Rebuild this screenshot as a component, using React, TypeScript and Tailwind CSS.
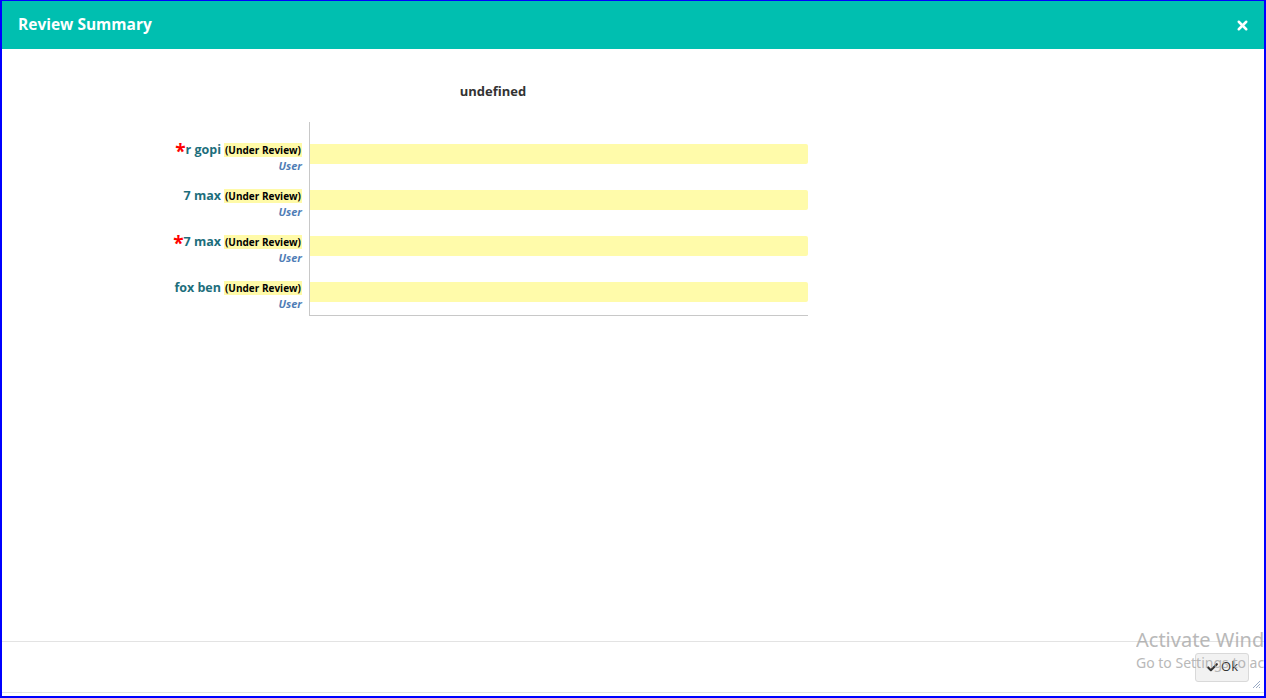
import { X, Check } from 'lucide-react'

const rows = [
  { name: 'r gopi', required: true },
  { name: '7 max', required: false },
  { name: '7 max', required: true },
  { name: 'fox ben', required: false },
]

export default function App() {
  return (
    <div
      className="relative w-[1266px] h-[698px] overflow-hidden bg-white border-t border-x-2 border-b-2 border-[#0000ff]"
      style={{ fontFamily: '"Open Sans", "Noto Sans", sans-serif' }}
    >
      <div className="flex flex-col h-[692px] border-b border-[#e3e3e3]">
        {/* header */}
        <div className="h-[48px] bg-[#00bfb0] flex items-center justify-between pl-4 pr-[14px] shrink-0">
          <h1 className="text-white text-[15.5px] font-bold">Review Summary</h1>
          <X size={15} strokeWidth={4} className="text-white" />
        </div>

        {/* body */}
        <div className="flex-1">
          <div className="ml-[176px] w-[630px] pt-[33px]">
            <div className="text-center text-[13px] font-bold text-[#333] leading-[18px]">undefined</div>
            <div className="flex items-start mt-[22px]">
              <div className="w-[124px] pt-[20px] flex flex-col items-end gap-[15px]">
                {rows.map((r, i) => (
                  <div key={i} className="flex flex-col items-end">
                    <div className="flex items-center h-[16px] whitespace-nowrap">
                      {r.required && (
                        <span className="text-[#ff0000] text-[19px] font-bold leading-none translate-y-[1px]">*</span>
                      )}
                      <span className="text-[12.5px] font-bold text-[#1d6e7c]">{r.name}</span>
                      <span className="ml-[3px] bg-[#fffaa8] text-black text-[10px] font-bold leading-[14px] px-px">
                        (Under Review)
                      </span>
                    </div>
                    <span className="text-[11px] italic font-bold text-[#4f7db6] leading-[15px]">User</span>
                  </div>
                ))}
              </div>
              <div className="ml-[7px] w-[500px] border-l border-b border-[#c8c8c8] pt-[22px] pb-[13px] flex flex-col gap-[26px]">
                {rows.map((_, i) => (
                  <div key={i} className="h-[20px] bg-[#fffbaa] rounded-r-[2px]" />
                ))}
              </div>
            </div>
          </div>
        </div>

        {/* footer */}
        <div className="h-[51px] border-t border-[#e3e3e3] flex items-center justify-end pr-[15px] shrink-0">
          <button className="flex items-center gap-[2px] h-[29px] px-[10px] bg-[#f2f2f2] border border-[#d9d9d9] rounded-[3px] text-[13px] text-[#333]">
            <Check size={13} strokeWidth={4} />
            Ok
          </button>
        </div>
      </div>

      {/* resize grip */}
      <svg className="absolute right-[4px] bottom-[8px]" width="8" height="8" viewBox="0 0 8 8">
        <path d="M8 1L1 8M8 4L4 8M8 7L7 8" stroke="#9aaac4" strokeWidth="1" />
      </svg>

      {/* windows watermark */}
      <div
        className="absolute left-[1134px] top-[626px] text-[#a8a8a8] whitespace-nowrap pointer-events-none opacity-80"
        style={{ fontFamily: '"Noto Sans", "Open Sans", sans-serif' }}
      >
        <div className="text-[20px] leading-[26px]">Activate Windows</div>
        <div className="text-[14px] leading-[20px]">Go to Settings to activate Windows.</div>
      </div>
    </div>
  )
}
